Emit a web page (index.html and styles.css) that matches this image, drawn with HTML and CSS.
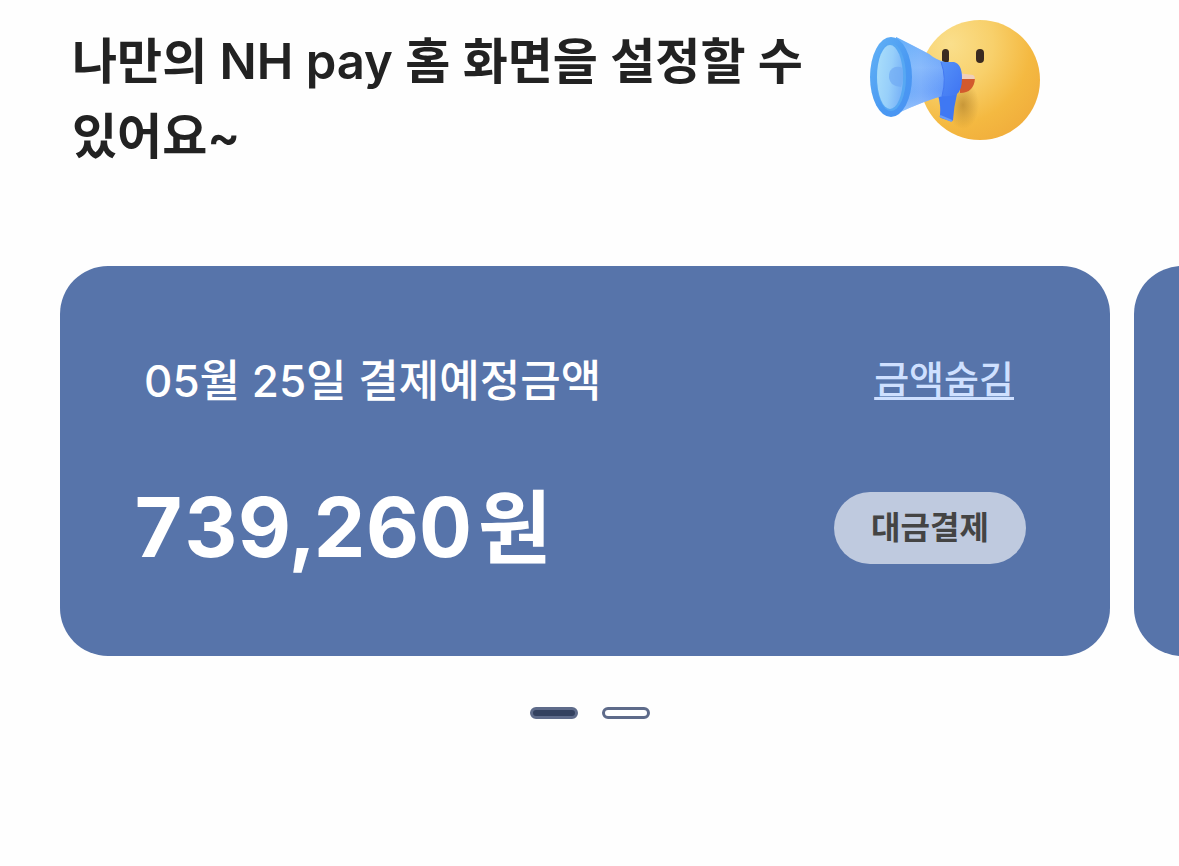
FILE: index.html
```html
<!DOCTYPE html>
<html lang="ko">
<head>
    <meta charset="UTF-8">
    <meta name="viewport" content="width=device-width, initial-scale=1.0">
    <title>NH pay</title>
    <link rel="stylesheet" href="styles.css">
</head>
<body>
    <header class="notice">
        <h1>나만의 NH pay 홈 화면을 설정할 수 있어요~</h1>
        <svg class="notice-icon" viewBox="0 0 172 124" aria-hidden="true">
            <defs>
                <radialGradient id="face" cx="0.25" cy="0.2" r="0.9">
                    <stop offset="0" stop-color="#fadf8c"/>
                    <stop offset="0.4" stop-color="#f8d06b"/>
                    <stop offset="0.75" stop-color="#f4b941"/>
                    <stop offset="1" stop-color="#f1ae3c"/>
                </radialGradient>
                <linearGradient id="cone" x1="0" y1="0" x2="1" y2="0">
                    <stop offset="0" stop-color="#6fb4fb"/>
                    <stop offset="0.5" stop-color="#7fb2fb"/>
                    <stop offset="1" stop-color="#5f96fa"/>
                </linearGradient>
                <linearGradient id="coneShade" x1="0" y1="0" x2="0" y2="1">
                    <stop offset="0" stop-color="#5aa9f8" stop-opacity="0.5"/>
                    <stop offset="0.4" stop-color="#9ac8fc" stop-opacity="0.4"/>
                    <stop offset="0.7" stop-color="#6ba0f8" stop-opacity="0.2"/>
                    <stop offset="1" stop-color="#b4d4fe" stop-opacity="0.7"/>
                </linearGradient>
                <linearGradient id="rim" x1="0" y1="0" x2="1" y2="1">
                    <stop offset="0" stop-color="#63b3f6"/>
                    <stop offset="0.6" stop-color="#4a99f2"/>
                    <stop offset="1" stop-color="#4a92f3"/>
                </linearGradient>
                <linearGradient id="bell" x1="0" y1="0" x2="1" y2="0.3">
                    <stop offset="0" stop-color="#abdffa"/>
                    <stop offset="0.6" stop-color="#97cffa"/>
                    <stop offset="1" stop-color="#7db7f8"/>
                </linearGradient>
                <linearGradient id="collar" x1="0" y1="0" x2="1" y2="1">
                    <stop offset="0" stop-color="#5591f8"/>
                    <stop offset="1" stop-color="#3f74f2"/>
                </linearGradient>
                <radialGradient id="shadow">
                    <stop offset="0" stop-color="#b07f28" stop-opacity="0.65"/>
                    <stop offset="1" stop-color="#b07f28" stop-opacity="0"/>
                </radialGradient>
            </defs>
            <circle cx="110" cy="62" r="60" fill="url(#face)"/>
            <ellipse cx="93" cy="87" rx="16" ry="24" fill="url(#shadow)"/>
            <rect x="72" y="31" width="7" height="14" rx="3.5" fill="#3a2a20"/>
            <rect x="106" y="31" width="8" height="14" rx="4" fill="#3a2a20"/>
            <path d="M90 57 L105 60 Q104 75 90 75 Z" fill="#d2592d"/>
            <path d="M88 55 L103 57 Q105 58 105 61 L88 61 Z" fill="#efcfba"/>
            <path d="M68 77 L87 76 Q84 88 83 102 Q82 104 80 103 L71 100 Q69 99 70 97 Q71 88 68 77 Z" fill="#3f78f3"/>
            <path d="M70 98 L82 103" stroke="#6b9df8" stroke-width="2"/>
            <path d="M26 19 Q46 29 59 36 Q66 42 75 44 L76 77 Q56 82 26 96 Z" fill="url(#cone)"/>
            <path d="M26 19 Q46 29 59 36 Q66 42 75 44 L76 77 Q56 82 26 96 Z" fill="url(#coneShade)"/>
            <path d="M71 44 L84 44 Q92 46 92 60 Q92 72 87 76 Q80 79 72 78 Q77 60 71 44 Z" fill="url(#collar)"/>
            <path d="M71 44 Q77 60 72 78" fill="none" stroke="#4479f2" stroke-width="1"/>
            <ellipse cx="21" cy="59" rx="21" ry="40" fill="url(#rim)"/>
            <ellipse cx="21" cy="59" rx="15" ry="34" fill="#57a8f3"/>
            <ellipse cx="20" cy="59" rx="13" ry="32" fill="url(#bell)"/>
            <path d="M25 49 Q30 48 32 50 Q35 59 31 69 Q26 69 22 66 Q17 60 20 53 Q22 50 25 49 Z" fill="#6fa9f3" opacity="0.7"/>
        </svg>
    </header>

    <main>
        <div class="carousel">
            <section class="card">
                <div class="card-row">
                    <h2>05월 25일 결제예정금액</h2>
                    <a class="hide-link" href="#">금액숨김</a>
                </div>
                <div class="card-row">
                    <p class="amount">739,260<span class="unit">원</span></p>
                    <button class="pay-button" type="button">대금결제</button>
                </div>
            </section>
            <section class="card"></section>
        </div>

        <div class="dots">
            <button class="dot active" type="button" aria-label="1"></button>
            <button class="dot" type="button" aria-label="2"></button>
        </div>
    </main>
</body>
</html>
```
FILE: styles.css
```css
* {
    box-sizing: border-box;
}
body {
    margin: 0;
    background: #fefefe;
    color: #222;
    font-family: Inter, "Noto Sans CJK KR", sans-serif;
}
h1, h2, p {
    margin: 0;
}
.notice {
    display: flex;
    align-items: flex-start;
    gap: 48px;
    padding: 18px 72px 0;
}
.notice h1 {
    flex: 0 1 750px;
    padding-top: 6px;
    font-size: 49px;
    font-weight: 600;
    line-height: 75px;
    word-break: keep-all;
}
.notice-icon {
    flex: none;
    width: 172px;
    height: 124px;
}
.carousel {
    display: flex;
    gap: 24px;
    margin-top: 92px;
    padding-left: 60px;
    overflow: hidden;
}
.card {
    flex: 0 0 calc(100% - 69px);
    padding: 80px 84px 70px 72px;
    border-radius: 48px;
    background: #5774aa;
    color: #fff;
}
.card-row {
    display: flex;
    justify-content: space-between;
    align-items: center;
}
.card-row + .card-row {
    margin-top: 54px;
}
.card h2 {
    padding-left: 12px;
    font-size: 44px;
    font-weight: 500;
    line-height: 70px;
}
.hide-link {
    margin-right: 12px;
    padding-bottom: 4px;
    color: #cfe0ff;
    font-size: 38px;
    font-weight: 500;
    line-height: 60px;
    text-decoration-thickness: 3px;
    text-underline-offset: 4px;
    text-decoration-skip-ink: none;
}
.amount {
    font-size: 82px;
    font-weight: 700;
    font-variant-numeric: tabular-nums;
    line-height: 116px;
}
.unit {
    margin-left: 6px;
    font-size: 80px;
}
.pay-button {
    width: 192px;
    height: 72px;
    padding: 0 0 6px;
    border: none;
    border-radius: 36px;
    background: #bfcadf;
    color: #444;
    font-family: inherit;
    font-size: 32px;
    font-weight: 600;
    cursor: pointer;
}
.dots {
    display: flex;
    justify-content: center;
    gap: 24px;
    margin-top: 51px;
}
.dot {
    width: 48px;
    height: 12px;
    padding: 0;
    border: 3px solid #5e6b8a;
    border-radius: 6px;
    background: #fff;
    cursor: pointer;
}
.dot.active {
    background: #33415f;
}
```
